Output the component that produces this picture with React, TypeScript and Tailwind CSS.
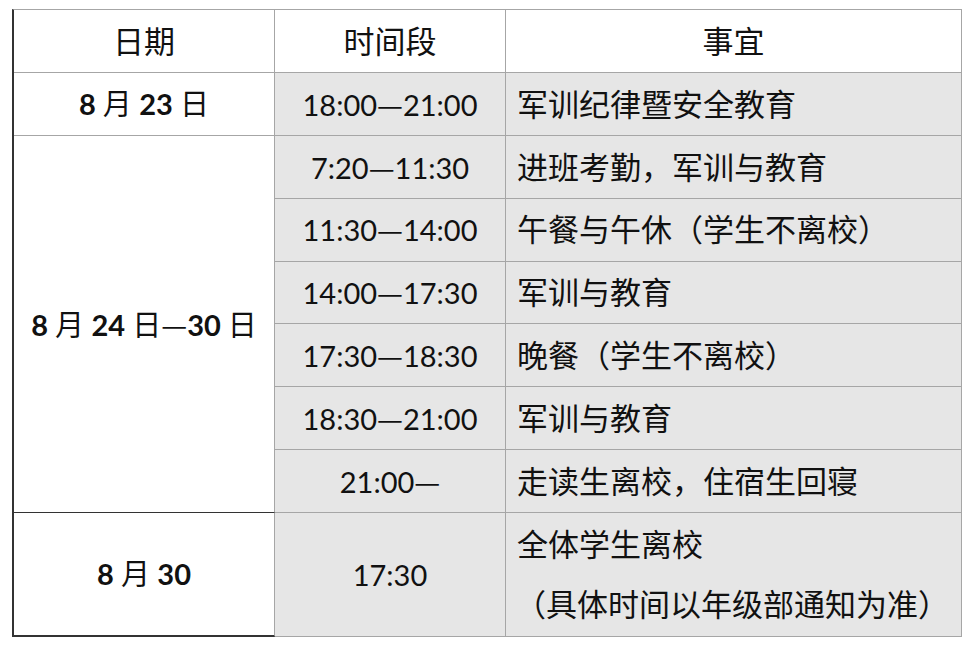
const cjk = '[font-family:Lato,"Noto_Sans_CJK_SC",sans-serif]';

type Row = { time: string; items: string[] };

const week: Row[] = [
  { time: '7:20—11:30', items: ['进班考勤，军训与教育'] },
  { time: '11:30—14:00', items: ['午餐与午休（学生不离校）'] },
  { time: '14:00—17:30', items: ['军训与教育'] },
  { time: '17:30—18:30', items: ['晚餐（学生不离校）'] },
  { time: '18:30—21:00', items: ['军训与教育'] },
  { time: '21:00—', items: ['走读生离校，住宿生回寝'] },
];

// the dash is full width in the source, so draw it in the CJK face
function Dash() {
  return <span className="font-normal [font-family:'Noto_Sans_CJK_SC',sans-serif]">—</span>;
}

function Time({ text }: { text: string }) {
  const parts = text.split('—');
  return (
    <span className="whitespace-pre">
      {parts[0]}
      {parts.length > 1 && <Dash />}
      {parts[1]}
    </span>
  );
}

function DateLabel({ parts }: { parts: [string, boolean][] }) {
  return (
    <span className="whitespace-pre">
      {parts.map(([t, bold], i) =>
        t === '—' ? (
          <Dash key={i} />
        ) : (
          <span key={i} className={bold ? 'font-bold' : 'font-normal'}>
            {t}
          </span>
        ),
      )}
    </span>
  );
}

export default function App() {
  const gray = 'border-[#a6a6a6]';
  const cell = `flex items-center border-r border-b ${gray}`;
  return (
    <div className={`min-h-[650px] bg-white pl-[12px] pt-[9px] text-[#111] ${cjk}`}>
      <div className="grid w-[950px] grid-cols-[261px_231px_456px] grid-rows-[63px_63px_repeat(6,62.8px)_124px] border-t border-l-2 border-t-[#a6a6a6] border-l-[#333]">
        {/* header */}
        <div className={`${cell} justify-center text-[31px]`}>日期</div>
        <div className={`${cell} justify-center text-[31px]`}>时间段</div>
        <div className={`${cell} justify-center text-[31px]`}>事宜</div>

        {/* 8月23日 */}
        <div className={`${cell} justify-center text-[29px]`}>
          <DateLabel parts={[['8 ', true], ['月 ', false], ['23 ', true], ['日', false]]} />
        </div>
        <div className={`${cell} justify-center bg-[#e6e6e6] text-[29px]`}>
          <Time text="18:00—21:00" />
        </div>
        <div className={`${cell} bg-[#e6e6e6] pl-[11px] text-[31px]`}>军训纪律暨安全教育</div>

        {/* 8月24日—30日 */}
        <div className="row-span-6 flex items-center justify-center border-r border-b border-r-[#a6a6a6] border-b-[#333] text-[29px]">
          <DateLabel
            parts={[
              ['8 ', true],
              ['月 ', false],
              ['24 ', true],
              ['日', false],
              ['—', false],
              ['30 ', true],
              ['日', false],
            ]}
          />
        </div>
        {week.map((r) => (
          <div key={r.time} className="contents">
            <div className={`${cell} justify-center bg-[#e6e6e6] text-[29px]`}>
              <Time text={r.time} />
            </div>
            <div className={`${cell} bg-[#e6e6e6] pl-[11px] text-[31px]`}>{r.items[0]}</div>
          </div>
        ))}

        {/* 8月30 */}
        <div className="flex items-center justify-center border-r border-b-2 border-r-[#a6a6a6] border-b-[#333] text-[29px]">
          <DateLabel parts={[['8 ', true], ['月 ', false], ['30', true]]} />
        </div>
        <div className={`${cell} justify-center bg-[#e6e6e6] text-[29px]`}>17:30</div>
        <div className={`flex flex-col justify-center gap-[18px] border-r border-b ${gray} bg-[#e6e6e6] pl-[11px] text-[31px] leading-[42px]`}>
          <div>全体学生离校</div>
          <div className="-ml-[2px]">（具体时间以年级部通知为准）</div>
        </div>
      </div>
    </div>
  );
}
